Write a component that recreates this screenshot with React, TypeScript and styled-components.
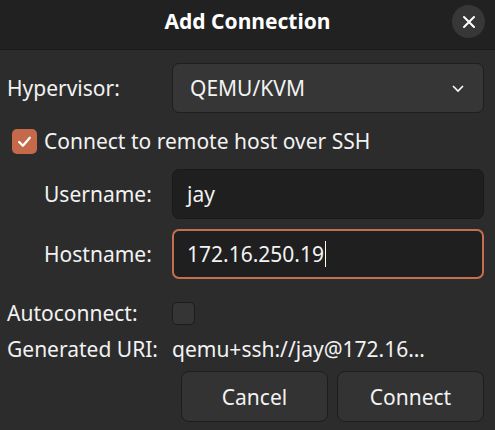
import React from "react";
import styled, { createGlobalStyle } from "styled-components";

const GlobalStyle = createGlobalStyle`
  html, body {
    margin: 0;
    padding: 0;
    background: #2c2c2c;
  }
  body {
    font-family: "Noto Sans", "DejaVu Sans", sans-serif;
    color: #f2f2f2;
  }
`;

const Dialog = styled.div`
  width: 495px;
  height: 430px;
  display: flex;
  flex-direction: column;
  background: #2c2c2c;
  overflow: hidden;
`;

const HeaderBar = styled.header`
  position: relative;
  height: 50px;
  box-sizing: border-box;
  padding-bottom: 8px;
  flex-shrink: 0;
  display: flex;
  align-items: center;
  justify-content: center;
  background: #212121;
  border-bottom: 1px solid #1a1a1a;
`;

const Title = styled.h1`
  margin: 0;
  font-size: 21px;
  font-weight: 700;
  color: #ffffff;
`;

const CloseButton = styled.button`
  position: absolute;
  right: 10px;
  top: 5px;
  width: 33px;
  height: 33px;
  border-radius: 50%;
  border: 0;
  background: #373737;
  color: #fff;
  display: flex;
  align-items: center;
  justify-content: center;
  padding: 0;
`;

const Body = styled.div`
  display: flex;
  flex-direction: column;
  padding: 13px 11px 0 7px;
`;

const FieldRow = styled.div<{ $indent?: boolean; $mt?: number }>`
  display: grid;
  grid-template-columns: ${(p) => (p.$indent ? "37px 128px" : "165px")} 1fr;
  align-items: center;
  margin-top: ${(p) => p.$mt ?? 0}px;
`;

const Label = styled.span<{ $col?: number }>`
  font-size: 21px;
  line-height: 26px;
  grid-column: ${(p) => p.$col ?? 1};
  white-space: nowrap;
`;

const Combo = styled.div`
  grid-column: -2;
  height: 50px;
  box-sizing: border-box;
  border-radius: 7px;
  background: #363636;
  border: 1px solid #1f1f1f;
  display: flex;
  align-items: center;
  justify-content: space-between;
  padding: 0 18px 0 17px;
  font-size: 21px;
`;

const Entry = styled.div<{ $focused?: boolean }>`
  grid-column: -2;
  height: 50px;
  box-sizing: border-box;
  border-radius: 7px;
  background: #1f1f1f;
  border: ${(p) => (p.$focused ? "2px solid #c4704f" : "1px solid #1a1a1a")};
  display: flex;
  align-items: center;
  padding: 0 ${(p) => (p.$focused ? 13 : 14)}px;
  font-size: 21px;
`;

const Caret = styled.span`
  display: inline-block;
  width: 1px;
  height: 26px;
  background: #fff;
  margin-left: 1px;
`;

const CheckRow = styled.label`
  display: flex;
  align-items: center;
  gap: 7px;
  margin: 15px 0 0 5px;
  font-size: 21px;
  line-height: 26px;
`;

const CheckBox = styled.span<{ $checked?: boolean }>`
  width: ${(p) => (p.$checked ? 25 : 23)}px;
  height: ${(p) => (p.$checked ? 25 : 23)}px;
  box-sizing: border-box;
  border-radius: 5px;
  background: ${(p) => (p.$checked ? "#c4694a" : "#353535")};
  border: ${(p) => (p.$checked ? "none" : "1px solid #1c1c1c")};
  display: flex;
  align-items: center;
  justify-content: center;
`;

const BoxCell = styled.div`
  grid-column: 2;
  display: flex;
`;

const Value = styled.span`
  grid-column: 2;
  font-size: 21px;
  line-height: 26px;
  white-space: nowrap;
`;

const ButtonRow = styled.div`
  display: flex;
  justify-content: flex-end;
  gap: 9px;
  margin-top: 9px;
`;

const Button = styled.button`
  width: 147px;
  height: 51px;
  border-radius: 8px;
  background: #333333;
  border: 1px solid #1d1d1d;
  color: #f2f2f2;
  font-family: inherit;
  font-size: 21px;
`;

function App() {
  return (
    <>
      <GlobalStyle />
      <Dialog>
        <HeaderBar>
          <Title>Add Connection</Title>
          <CloseButton aria-label="Close">
            <svg width={14} height={14} viewBox="0 0 14 14">
              <path d="M2 2L12 12M12 2L2 12" stroke="#fff" strokeWidth={2} strokeLinecap="round" />
            </svg>
          </CloseButton>
        </HeaderBar>
        <Body>
          <FieldRow>
            <Label>Hypervisor:</Label>
            <Combo>
              <span>QEMU/KVM</span>
              <svg width={14} height={14} viewBox="0 0 14 14">
                <path d="M2 5L7 10L12 5" stroke="#fff" strokeWidth={1.6} fill="none" />
              </svg>
            </Combo>
          </FieldRow>
          <CheckRow>
            <CheckBox $checked>
              <svg width={17} height={17} viewBox="0 0 16 16">
                <path d="M3 8.5L6.5 12L13 4.5" stroke="#fff" strokeWidth={2.2} fill="none" strokeLinecap="round" strokeLinejoin="round" />
              </svg>
            </CheckBox>
            Connect to remote host over SSH
          </CheckRow>
          <FieldRow $indent $mt={15}>
            <Label $col={2}>Username:</Label>
            <Entry>jay</Entry>
          </FieldRow>
          <FieldRow $indent $mt={10}>
            <Label $col={2}>Hostname:</Label>
            <Entry $focused>
              172.16.250.19
              <Caret />
            </Entry>
          </FieldRow>
          <FieldRow $mt={21}>
            <Label>Autoconnect:</Label>
            <BoxCell>
              <CheckBox />
            </BoxCell>
          </FieldRow>
          <FieldRow $mt={10}>
            <Label>Generated URI:</Label>
            <Value>qemu+ssh://jay@172.16…</Value>
          </FieldRow>
          <ButtonRow>
            <Button>Cancel</Button>
            <Button>Connect</Button>
          </ButtonRow>
        </Body>
      </Dialog>
    </>
  );
}

export default App;
